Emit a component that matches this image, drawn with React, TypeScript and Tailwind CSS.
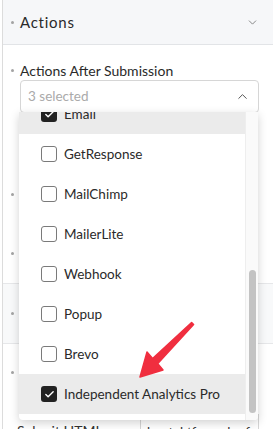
import { Check, ChevronDown, ChevronUp } from "lucide-react"

const options = [
  { label: "Email", checked: true, hover: true },
  { label: "GetResponse" },
  { label: "MailChimp" },
  { label: "MailerLite" },
  { label: "Webhook" },
  { label: "Popup" },
  { label: "Brevo" },
  { label: "Independent Analytics Pro", checked: true, hover: true },
]

function Dot() {
  return <span className="w-[3px] h-[3px] rounded-full bg-[#a3a3a3] shrink-0" />
}

function Box({ checked }: { checked?: boolean }) {
  if (checked) {
    return (
      <span className="w-4 h-4 rounded-[3px] bg-[#222] flex items-center justify-center shrink-0">
        <Check size={11} strokeWidth={3} className="text-white" />
      </span>
    )
  }
  return <span className="w-4 h-4 rounded-[3px] border-[1.5px] border-[#7a7a7a] bg-white shrink-0" />
}

export default function App() {
  return (
    <div
      className="relative w-[273px] h-[429px] overflow-hidden bg-white text-[#333]"
      style={{ fontFamily: "Lato, 'Open Sans', sans-serif" }}
    >
      {/* background panel */}
      <div className="ml-[2px] border-l border-[#dcdcdc] h-full flex flex-col">
        <div className="h-[45px] bg-[#f6f7f9] border-b border-[#e2e4e7] flex items-center pl-[8px] pr-[14px] shrink-0">
          <Dot />
          <span className="ml-[6px] text-[15px] tracking-[0.05em] text-[#2a2a2a]">Actions</span>
          <ChevronDown size={13} strokeWidth={1.6} className="ml-auto text-[#777]" />
        </div>

        <div className="pt-[15px] flex flex-col">
          <div className="flex items-center pl-[8px] h-[20px]">
            <Dot />
            <span className="ml-[6px] text-[14px] text-[#2a2a2a]">Actions After Submission</span>
          </div>
          <div className="ml-[17px] mr-[14px] h-[33px] border border-[#d6d6d6] rounded-[4px] flex items-center pl-[7px] pr-[8px]">
            <span className="text-[13.5px] text-[#aaa]">3 selected</span>
            <ChevronUp size={15} strokeWidth={1.6} className="ml-auto text-[#555]" />
          </div>
        </div>

        <div className="h-[51px] shrink-0" />
        <div className="h-[60px] shrink-0 flex items-center pl-[8px]"><Dot /></div>
        <div className="h-[60px] shrink-0 flex items-center pl-[8px] border-b border-[#e6e7e9]"><Dot /></div>
        <div className="h-[60px] shrink-0 flex items-center pl-[8px] bg-[#f8f9fa] border-b border-[#e6e7e9]"><Dot /></div>
        <div className="h-[56px] shrink-0 flex items-center pl-[8px]"><Dot /></div>
        <div className="flex items-start pl-[8px] pt-[14px] shrink-0">
          <span className="mt-[14px]"><Dot /></span>
          <span className="ml-[6px] mt-[6px] text-[14px]">Submit HTML</span>
          <div className="ml-auto mr-[14px] w-[119px] h-[34px] border border-[#d6d6d6] pl-[6px] pt-[7px] text-[13.5px] overflow-hidden whitespace-nowrap">
            kontaktformular for
          </div>
        </div>
      </div>

      {/* dropdown */}
      <div className="absolute left-[19px] top-[112px] w-[239px] h-[308px] bg-white rounded-b-[4px] shadow-[0_3px_10px_rgba(0,0,0,0.18)] flex overflow-hidden">
        <div className="flex-1 overflow-hidden">
          <div className="-mt-[18px]">
            {options.map((o) => (
              <div
                key={o.label}
                className={`h-[40px] flex items-center pl-[22px] gap-[7px] text-[13.5px] text-[#2a2a2a] ${o.hover ? "bg-[#ebebeb]" : ""}`}
              >
                <Box checked={o.checked} />
                <span className="whitespace-nowrap">{o.label}</span>
              </div>
            ))}
          </div>
        </div>
        <div className="w-[13px] bg-[#fafafa] border-l border-[#eeeeee] flex flex-col items-center pt-[158px]">
          <div className="w-[7px] h-[143px] rounded-full bg-[#c3c3c3]" />
        </div>
      </div>

      {/* annotation arrow */}
      <svg className="absolute inset-0 w-full h-full pointer-events-none" viewBox="0 0 273 429">
        <polygon
          points="191.6,322.6 193.6,324.6 157.8,363.6 163,370 140,377 147,352 152.6,358.6"
          fill="#f02e3f"
          stroke="#f02e3f"
          strokeWidth="1.5"
          strokeLinejoin="round"
        />
      </svg>
    </div>
  )
}
